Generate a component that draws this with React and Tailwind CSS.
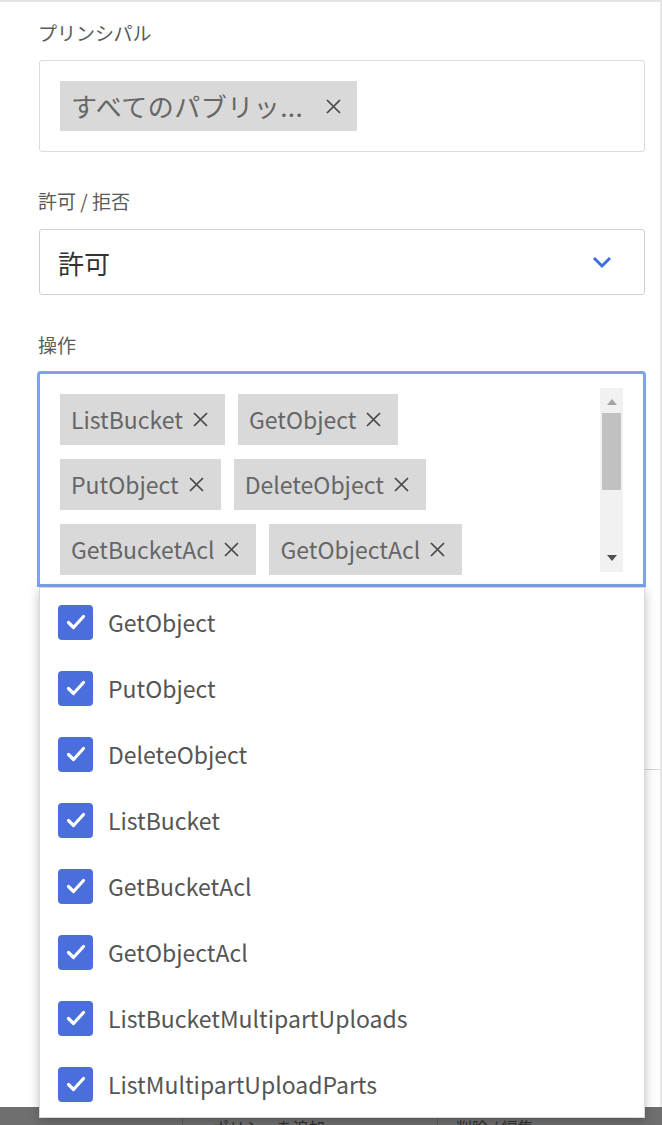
import React from "react"

const font = { fontFamily: '"Noto Sans CJK JP", "Noto Sans", sans-serif' }

const actions = [
  "GetObject",
  "PutObject",
  "DeleteObject",
  "ListBucket",
  "GetBucketAcl",
  "GetObjectAcl",
  "ListBucketMultipartUploads",
  "ListMultipartUploadParts",
]

const chipRows = [
  ["ListBucket", "GetObject"],
  ["PutObject", "DeleteObject"],
  ["GetBucketAcl", "GetObjectAcl"],
]

const CloseIcon = () => (
  <svg width="17" height="17" viewBox="0 0 17 17" className="shrink-0">
    <path d="M2 2L15 15M15 2L2 15" stroke="#474747" strokeWidth="1.7" fill="none" />
  </svg>
)

const Chip = ({ label }) => (
  <div className="flex items-center h-[51px] bg-[#d9d9d9] pl-[11px] pr-[16px] gap-[9px] text-[23px] text-[#666]">
    <span className="leading-none">{label}</span>
    <CloseIcon />
  </div>
)

const CheckBox = () => (
  <div className="w-[35px] h-[35px] rounded-[4px] bg-[#4a6fdc] flex items-center justify-center shrink-0">
    <svg width="22" height="22" viewBox="0 0 22 22">
      <path d="M3.5 11.5L8.5 16.5L18.5 5.5" stroke="#fff" strokeWidth="3.2" fill="none" strokeLinecap="round" strokeLinejoin="round" />
    </svg>
  </div>
)

export default function App() {
  return (
    <div className="w-[662px] h-[1125px] relative overflow-hidden bg-[#6f6f6f]" style={font}>
      {/* panel */}
      <div className="h-[1107px] bg-white border-t-2 border-[#e3e3e3] border-r-2 border-r-[#e6e6e6] flex flex-col">
        <div className="pl-[38px] mt-[18px] h-[26px] text-[19px] leading-[26px] text-[#5a5a5a]">プリンシパル</div>
        <div className="ml-[39px] w-[606px] mt-[14px] h-[92px] border border-[#dadada] rounded-[3px] p-[20px]">
          <div className="inline-flex items-center h-[50px] bg-[#d9d9d9] pl-[11px] pr-[15px] gap-[22px] text-[26px] text-[#666]">
            <span className="leading-none tracking-[0.5px]">すべてのパブリッ...</span>
            <CloseIcon />
          </div>
        </div>

        <div className="pl-[38px] mt-[36px] h-[26px] text-[19px] leading-[26px] text-[#5a5a5a]">許可 / 拒否</div>
        <div className="ml-[39px] w-[606px] mt-[15px] h-[66px] border border-[#cfcfcf] rounded-[3px] flex items-center justify-between pl-[18px] pr-[32px]">
          <span className="text-[26px] text-[#333]">許可</span>
          <svg width="20" height="14" viewBox="0 0 20 14">
            <path d="M2 3L10 11L18 3" stroke="#3b6ee0" strokeWidth="3" fill="none" />
          </svg>
        </div>

        <div className="pl-[38px] mt-[37px] h-[26px] text-[19px] leading-[26px] text-[#5a5a5a]">操作</div>
        <div className="ml-[37px] w-[609px] mt-[13px] h-[216px] border-[3px] border-[#7ba3ef] rounded-t-[4px] flex pl-[20px] pr-[20px] pt-[14px]">
          <div className="flex-1 flex flex-col gap-[14px] pt-[6px]">
            {chipRows.map((row) => (
              <div key={row[0]} className="flex gap-[13px]">
                {row.map((c) => (
                  <Chip key={c} label={c} />
                ))}
              </div>
            ))}
          </div>
          <div className="w-[23px] h-[184px] bg-[#f1f1f1] flex flex-col items-center">
            <svg width="12" height="8" viewBox="0 0 12 8" className="mt-[10px]">
              <path d="M1 7L6 1L11 7Z" fill="#a3a3a3" />
            </svg>
            <div className="w-[19px] h-[77px] bg-[#c1c1c1] mt-[7px]" />
            <svg width="12" height="8" viewBox="0 0 12 8" className="mt-auto mb-[10px]">
              <path d="M1 1L6 7L11 1Z" fill="#505050" />
            </svg>
          </div>
        </div>

        <div className="ml-[300px] mt-[182px] border-t border-[#d6d6d6]" />
      </div>

      {/* dimmed footer */}
      <div className="h-[18px] flex text-[16px] text-[#2e2e2e] leading-none">
        <div className="w-[183px] border-r border-[#5c5c5c]" />
        <div className="w-[255px] border-r border-[#5c5c5c] pl-[30px] pt-[12px]">ポリシーを追加</div>
        <div className="pl-[18px] pt-[12px]">削除 / 編集</div>
      </div>

      {/* dropdown menu */}
      <div className="absolute left-[39px] top-[587px] w-[606px] h-[531px] bg-white border border-[#d9d9d9] shadow-[0_3px_10px_rgba(0,0,0,0.25)] pt-[1px]">
        {actions.map((a) => (
          <div key={a} className="h-[66px] flex items-center pl-[18px] gap-[15px]">
            <CheckBox />
            <span className="text-[23px] text-[#555]">{a}</span>
          </div>
        ))}
      </div>
    </div>
  )
}
